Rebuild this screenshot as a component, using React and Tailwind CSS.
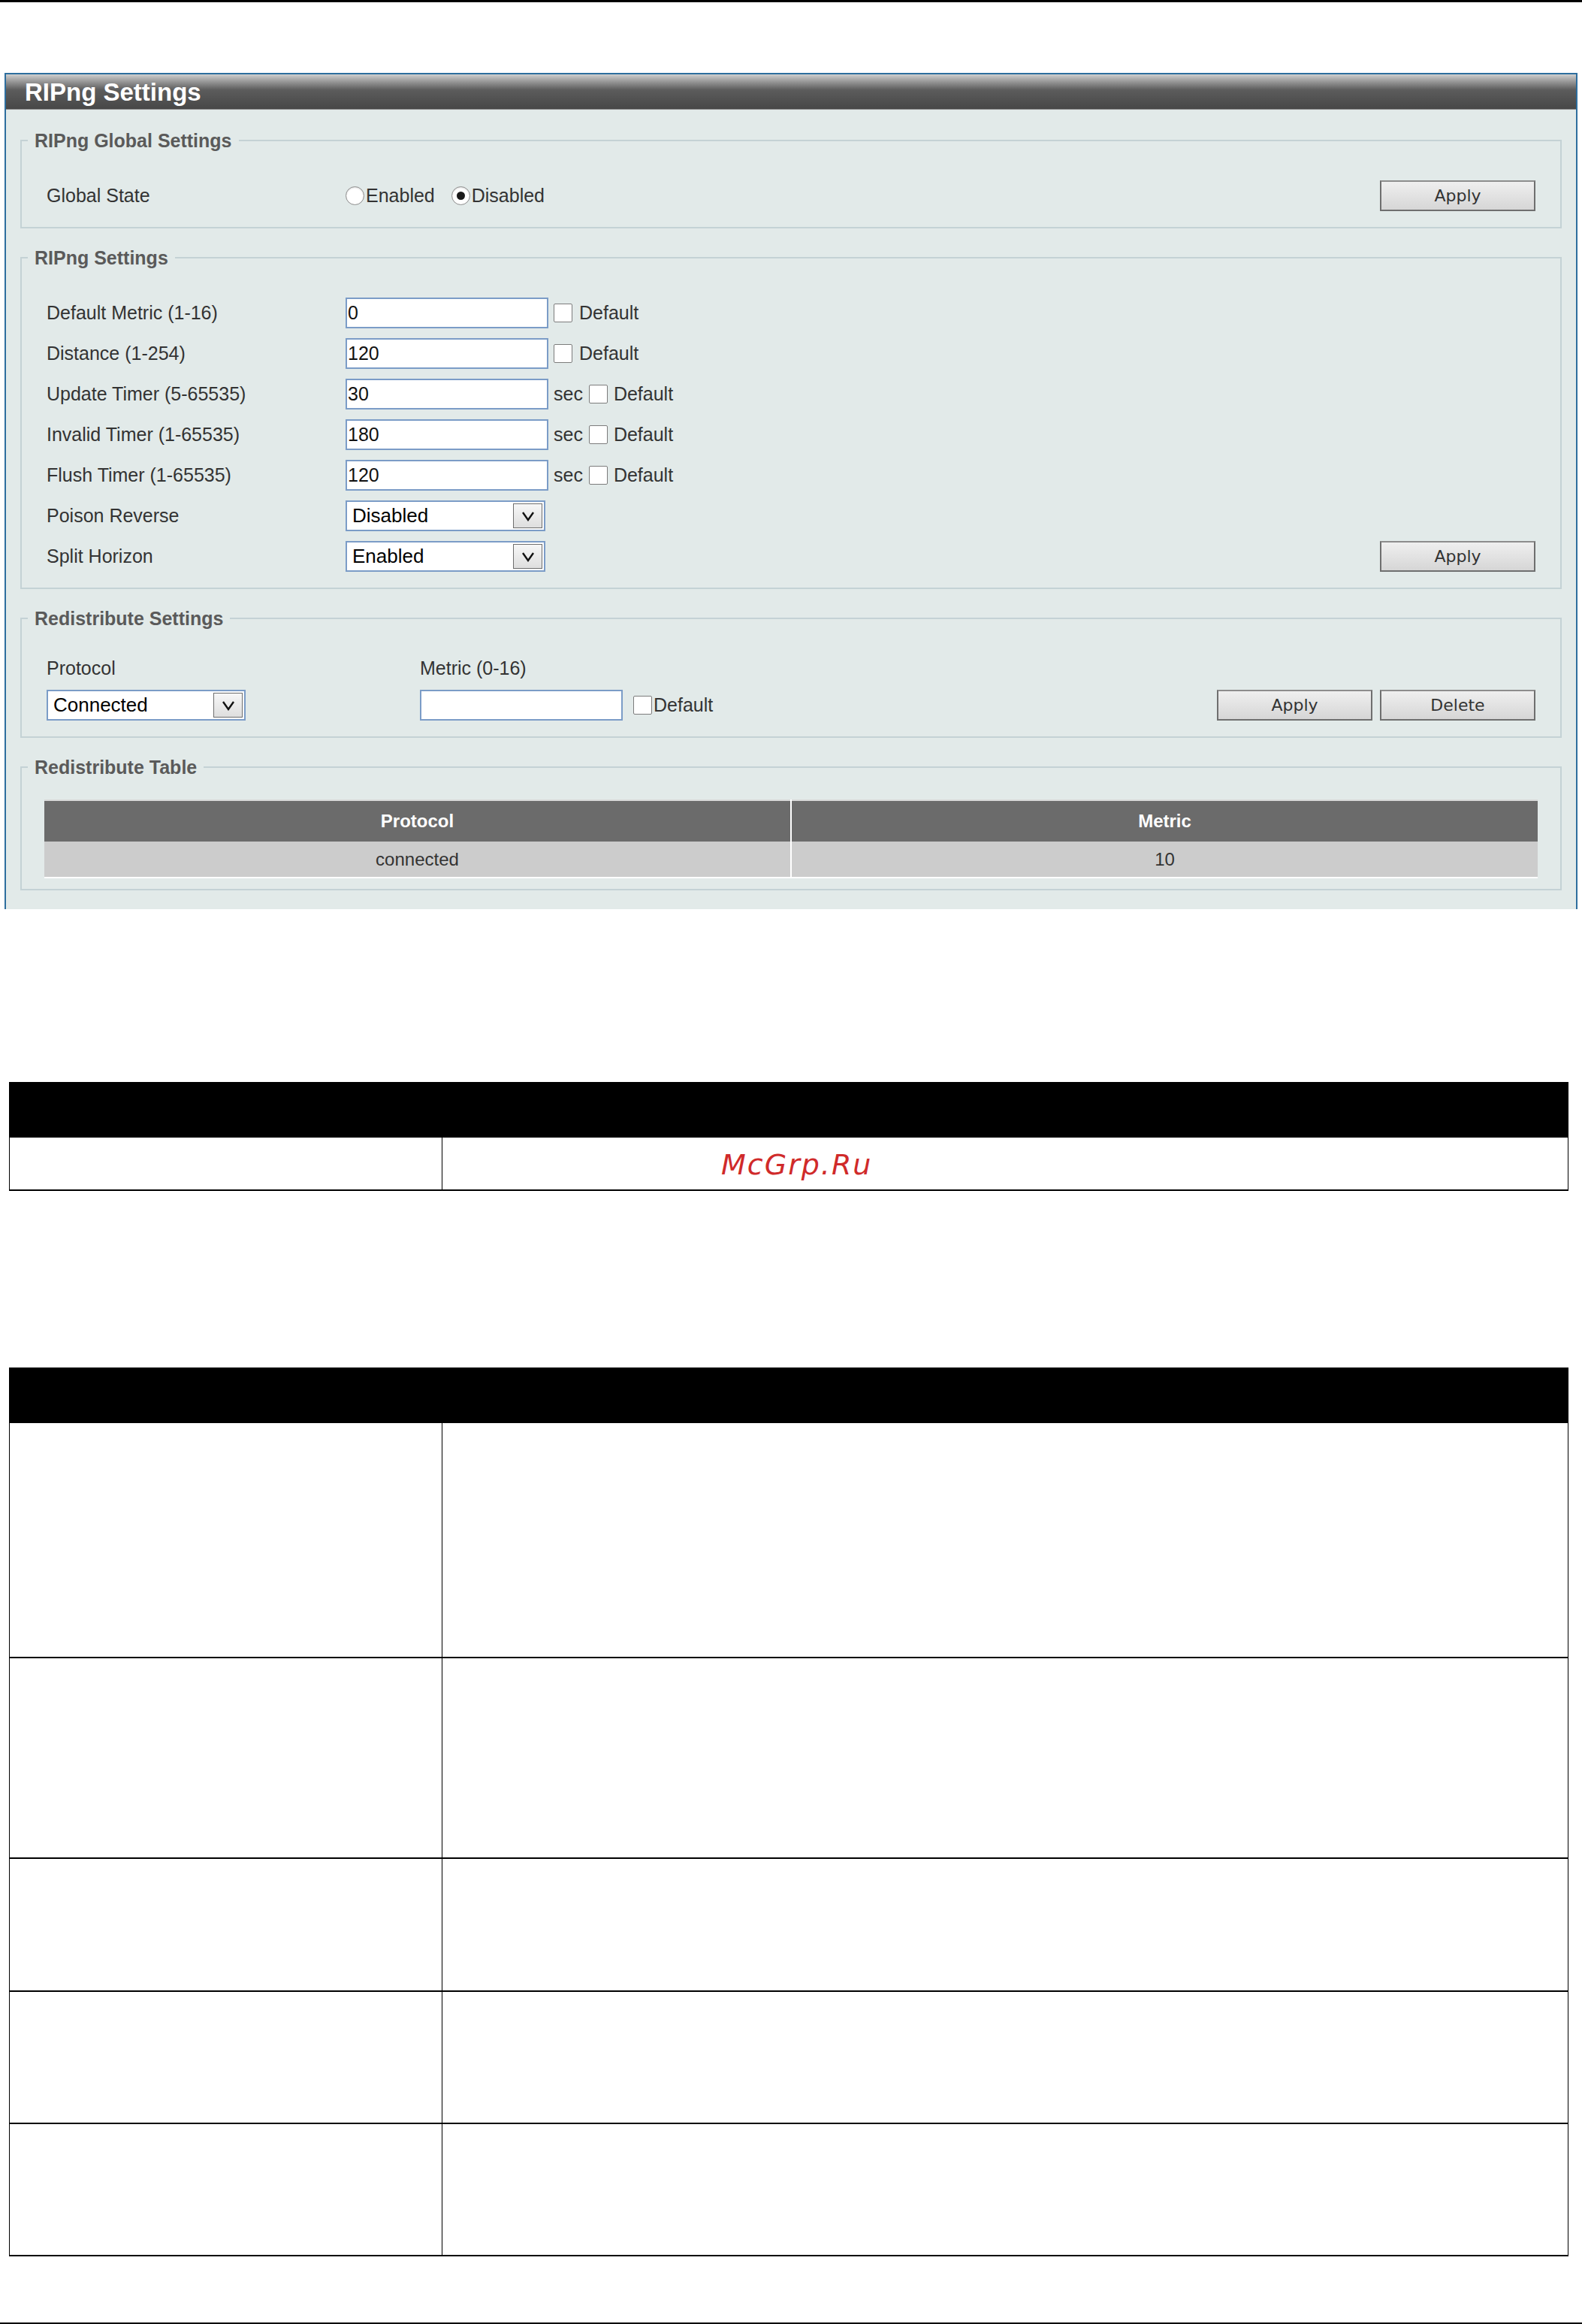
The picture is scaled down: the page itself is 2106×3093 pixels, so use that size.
const Radio = ({ checked }) => (
  <span className="flex h-[25px] w-[25px] items-center justify-center rounded-full border border-[#8c8c8c] bg-white shadow-[inset_0_1px_2px_rgba(0,0,0,0.15)]">
    {checked && <span className="h-[11px] w-[11px] rounded-full bg-[#1a1a1a]" />}
  </span>
);

const Checkbox = () => (
  <span className="inline-block h-[25px] w-[25px] rounded-[2px] border border-[#7c7c7c] bg-white" />
);

const TextBox = ({ value = '' }) => (
  <div className="flex h-[41px] w-[270px] items-center border-2 border-[#7b9cc7] bg-white px-[1px] text-[25px] text-[#111]">
    {value}
  </div>
);

const Select = ({ value, width = 'w-[266px]' }) => (
  <div className={`${width} flex h-[41px] items-center justify-between border-2 border-[#7b9cc7] bg-white pl-[7px] pr-[2px] text-[26px] text-black`}>
    <span>{value}</span>
    <span className="flex h-[33px] w-[39px] items-center justify-center border border-[#6e6e6e] bg-linear-to-b from-[#f7f7f7] to-[#dedede]">
      <svg width="18" height="14" viewBox="0 0 18 14" fill="none">
        <polyline points="2,2 9,12 16,2" stroke="#111" strokeWidth="2.4" />
      </svg>
    </span>
  </div>
);

const Button = ({ children }) => (
  <button
    type="button"
    className="h-[41px] w-[207px] border-2 border-[#6f6f6f] border-t-[#8d8d8d] bg-linear-to-b from-[#efefef] to-[#d6d6d6] font-['DejaVu_Sans',sans-serif] text-[22px] text-[#333]"
  >
    {children}
  </button>
);

const Fieldset = ({ legend, className = '', children }) => (
  <fieldset className={`mx-[19px] min-w-0 border-2 border-[#c4d2d5] p-0 ${className}`}>
    <legend className="ml-[8px] px-[9px] text-[25px] font-bold leading-[28px] text-[#5a5a5a]">{legend}</legend>
    {children}
  </fieldset>
);

const settingRows = [
  { label: 'Default Metric (1-16)', value: '0', sec: false },
  { label: 'Distance (1-254)', value: '120', sec: false },
  { label: 'Update Timer (5-65535)', value: '30', sec: true },
  { label: 'Invalid Timer (1-65535)', value: '180', sec: true },
  { label: 'Flush Timer (1-65535)', value: '120', sec: true },
];

const DocTableRow = ({ height, children }) => (
  <div className={`flex ${height} border-x border-b-2 border-black`}>
    <div className="w-[576px] border-r border-black" />
    <div className="flex-1">{children}</div>
  </div>
);

export default function App() {
  return (
    <div className="h-[3093px] w-[2106px] overflow-hidden bg-white font-['Liberation_Sans',Arial,sans-serif]">
      <div className="h-[3px] bg-black" />

      <div className="pl-[6px] pt-[94px]">
        <div className="w-[2094px] border-2 border-b-0 border-[#2e6e9e] bg-[#e2eae9] pb-[25px]">
          <div className="h-[47px] border-b border-[#8d8d8d] bg-linear-to-b from-[#cfcfcf] via-[#5c5c5c] via-45% to-[#474747] pl-[25px] text-[33px] font-bold leading-[47px] text-white">
            RIPng Settings
          </div>

          <Fieldset legend="RIPng Global Settings" className="mt-[27px]">
            <div className="px-[33px] pt-[39px] pb-[21px] text-[25px] text-[#333]">
              <div className="flex h-[41px] items-center">
                <span className="w-[398px]">Global State</span>
                <Radio />
                <span className="ml-[2px]">Enabled</span>
                <span className="ml-[22px]"><Radio checked /></span>
                <span className="ml-[2px]">Disabled</span>
                <span className="ml-auto"><Button>Apply</Button></span>
              </div>
            </div>
          </Fieldset>

          <Fieldset legend="RIPng Settings" className="mt-[25px]">
            <div className="flex flex-col gap-[13px] px-[33px] pt-[39px] pb-[21px] text-[25px] text-[#333]">
              {settingRows.map((row) => (
                <div key={row.label} className="flex h-[41px] items-center">
                  <span className="w-[398px]">{row.label}</span>
                  <TextBox value={row.value} />
                  {row.sec ? (
                    <>
                      <span className="ml-[7px]">sec</span>
                      <span className="ml-[8px] flex"><Checkbox /></span>
                      <span className="ml-[8px]">Default</span>
                    </>
                  ) : (
                    <>
                      <span className="ml-[7px] flex"><Checkbox /></span>
                      <span className="ml-[9px]">Default</span>
                    </>
                  )}
                </div>
              ))}
              <div className="flex h-[41px] items-center">
                <span className="w-[398px]">Poison Reverse</span>
                <Select value="Disabled" />
              </div>
              <div className="flex h-[41px] items-center">
                <span className="w-[398px]">Split Horizon</span>
                <Select value="Enabled" />
                <span className="ml-auto"><Button>Apply</Button></span>
              </div>
            </div>
          </Fieldset>

          <Fieldset legend="Redistribute Settings" className="mt-[25px]">
            <div className="px-[33px] pt-[39px] pb-[21px] text-[25px] text-[#333]">
              <div className="flex h-[28px] items-center">
                <span className="w-[497px]">Protocol</span>
                <span>Metric (0-16)</span>
              </div>
              <div className="mt-[14px] flex h-[41px] items-center">
                <div className="w-[497px]">
                  <Select value="Connected" width="w-[265px]" />
                </div>
                <TextBox />
                <span className="ml-[14px] flex"><Checkbox /></span>
                <span className="ml-[2px]">Default</span>
                <span className="ml-auto flex gap-[10px]">
                  <Button>Apply</Button>
                  <Button>Delete</Button>
                </span>
              </div>
            </div>
          </Fieldset>

          <Fieldset legend="Redistribute Table" className="mt-[25px]">
            <div className="px-[30px] pt-[29px] pb-[14px]">
              <table className="w-full table-fixed border-collapse text-[24px]">
                <thead>
                  <tr className="h-[55px] border-t-2 border-[#d9d9d9] bg-[#6b6b6b] text-white">
                    <th className="border-r-2 border-white font-bold">Protocol</th>
                    <th className="font-bold">Metric</th>
                  </tr>
                </thead>
                <tbody>
                  <tr className="h-[48px] border-b-2 border-white bg-[#cccccc] text-center text-[#333]">
                    <td className="border-r-2 border-white">connected</td>
                    <td>10</td>
                  </tr>
                </tbody>
              </table>
            </div>
          </Fieldset>
        </div>
      </div>

      <div className="ml-[12px] mt-[230px] w-[2076px]">
        <div className="h-[74px] bg-black" />
        <DocTableRow height="h-[71px]">
          <div className="pl-[371px] pt-[17px] font-['DejaVu_Sans',sans-serif] text-[38px] italic leading-[38px] tracking-[2px] text-[#d02a2a]">
            McGrp.Ru
          </div>
        </DocTableRow>
      </div>

      <div className="ml-[12px] mt-[235px] w-[2076px]">
        <div className="h-[74px] bg-black" />
        <DocTableRow height="h-[313px]" />
        <DocTableRow height="h-[267px]" />
        <DocTableRow height="h-[177px]" />
        <DocTableRow height="h-[176px]" />
        <DocTableRow height="h-[176px]" />
      </div>

      <div className="mt-[88px] h-[4px] bg-black" />
    </div>
  );
}
